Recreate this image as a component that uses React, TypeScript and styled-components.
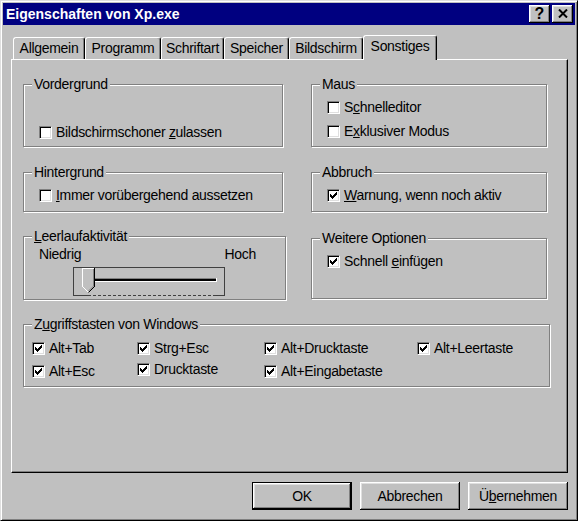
import React from "react";
import styled, { createGlobalStyle } from "styled-components";

const GlobalStyle = createGlobalStyle`
  html, body {
    margin: 0;
    padding: 0;
    background: #c0c0c0;
  }
  body {
    font-family: "Liberation Sans", Arial, sans-serif;
    font-size: 14px;
    letter-spacing: -0.3px;
    color: #000;
  }
`;

const raised = `
  box-shadow: inset -1px -1px #000, inset 1px 1px #fff,
    inset -2px -2px #808080, inset 2px 2px #dfdfdf;
`;

const Window = styled.div`
  width: 578px;
  height: 521px;
  box-sizing: border-box;
  background: #c0c0c0;
  border: 1px solid;
  border-color: #dfdfdf #000 #000 #dfdfdf;
  box-shadow: inset 1px 1px #fff, inset -1px -1px #808080;
  padding: 2px;
  display: flex;
  flex-direction: column;
`;

const TitleBar = styled.div`
  height: 22px;
  background: #000080;
  display: flex;
  align-items: center;
  padding: 0 2px 0 3px;
`;

const TitleText = styled.div`
  flex: 1;
  color: #fff;
  font-weight: bold;
  font-size: 14px;
  letter-spacing: 0;
  white-space: nowrap;
`;

const CaptionButtons = styled.div`
  display: flex;
  gap: 2px;
`;

const CaptionButton = styled.div`
  width: 21px;
  height: 18px;
  box-sizing: border-box;
  background: #c0c0c0;
  ${raised}
  display: flex;
  align-items: center;
  justify-content: center;
  font-weight: bold;
  font-size: 16px;
  line-height: 1;
  letter-spacing: 0;
  padding-bottom: 1px;
`;

const Body = styled.div`
  padding: 10px 7px 0 8px;
  display: flex;
  flex-direction: column;
`;

const TabStrip = styled.div`
  display: flex;
  align-items: flex-end;
  height: 24px;
  padding-left: 2px;
  position: relative;
  z-index: 1;
`;

const Tab = styled.div<{ $w: number; $active?: boolean }>`
  width: ${(p) => p.$w}px;
  height: ${(p) => (p.$active ? 25 : 22)}px;
  margin-bottom: ${(p) => (p.$active ? -1 : 0)}px;
  box-sizing: border-box;
  border: 1px solid;
  border-bottom: none;
  border-color: #fff #000 transparent #fff;
  border-radius: 3px 3px 0 0;
  box-shadow: inset -1px 0 #808080;
  background: #c0c0c0;
  display: flex;
  justify-content: center;
  padding-top: 4px;
  line-height: 13px;
  white-space: nowrap;
`;

const Sheet = styled.div`
  width: 557px;
  height: 414px;
  box-sizing: border-box;
  border: 1px solid;
  border-color: #fff #000 #000 #fff;
  box-shadow: inset -1px -1px #808080;
  padding: 24px 0 0 11px;
`;

const Row = styled.div<{ $mt?: number }>`
  display: grid;
  grid-template-columns: 288px 236px;
  align-items: start;
  margin-top: ${(p) => p.$mt ?? 0}px;
`;

const Group = styled.div<{ $w: number; $h: number; $pt: number; $mt?: number }>`
  position: relative;
  box-sizing: border-box;
  width: ${(p) => p.$w}px;
  height: ${(p) => p.$h}px;
  margin-top: ${(p) => p.$mt ?? 0}px;
  border: 1px solid #808080;
  box-shadow: inset 1px 1px #fff, 1px 1px #fff;
  padding: ${(p) => p.$pt}px 0 0 15px;
`;

const Legend = styled.div`
  position: absolute;
  top: -8px;
  left: 8px;
  padding: 0 2px;
  background: #c0c0c0;
  line-height: 14px;
  white-space: nowrap;
`;

const Key = styled.span`
  text-decoration: underline;
`;

const CheckList = styled.div`
  display: flex;
  flex-direction: column;
  gap: 11px;
`;

const CheckRow = styled.div<{ $up?: boolean }>`
  display: flex;
  align-items: center;
  gap: 4px;
  height: 13px;
  line-height: 13px;
  white-space: nowrap;
  margin-top: ${(p) => (p.$up ? -2 : 0)}px;
`;

const CheckBox = styled.span`
  display: block;
  flex: none;
  width: 13px;
  height: 13px;
  box-sizing: border-box;
  background: #fff;
  border: 1px solid;
  border-color: #808080 #fff #fff #808080;
  box-shadow: inset 1px 1px #000, inset -1px -1px #dfdfdf;
`;

const Mark = styled.svg`
  display: block;
`;

const KeysGrid = styled.div`
  display: grid;
  grid-template-columns: 105px 127px 153px auto;
  row-gap: 10px;
  margin-left: -7px;
`;

const SliderLabels = styled.div`
  width: 217px;
  display: flex;
  justify-content: space-between;
  line-height: 13px;
`;

const SliderFrame = styled.svg`
  display: block;
  margin: 6px 0 0 34px;
`;

const ButtonRow = styled.div`
  width: 557px;
  display: flex;
  justify-content: flex-end;
  gap: 8px;
  margin-top: 9px;
`;

const Button = styled.button<{ $default?: boolean }>`
  width: 100px;
  height: 28px;
  box-sizing: border-box;
  padding: 0;
  font: inherit;
  letter-spacing: inherit;
  color: #000;
  background: #c0c0c0;
  border: ${(p) => (p.$default ? "1px solid #000" : "none")};
  ${raised}
`;

const markCols = [4, 5, 6, 5, 4, 3, 2];

const Check = ({
  checked,
  up,
  children,
}: {
  checked?: boolean;
  up?: boolean;
  children: React.ReactNode;
}) => (
  <CheckRow $up={up}>
    <CheckBox>
      {checked && (
        <Mark width="11" height="11" viewBox="0 0 11 11" shapeRendering="crispEdges">
          {markCols.map((y, i) => (
            <rect key={i} x={2 + i} y={y} width="1" height="3" fill="#000" />
          ))}
        </Mark>
      )}
    </CheckBox>
    <span>{children}</span>
  </CheckRow>
);

const Slider = () => (
  <SliderFrame width="152" height="29" viewBox="0 0 152 29">
    <g shapeRendering="crispEdges" stroke="#404040" fill="none">
      <path d="M0.5 28.5 V0.5 H151.5 V28.5" />
      <path d="M0 28.5 H15 M140 28.5 H152" />
      <path d="M15 28.5 H140" strokeDasharray="3 2" />
    </g>
    <g shapeRendering="crispEdges">
      <rect x="15" y="11" width="128" height="1" fill="#808080" />
      <rect x="15" y="12" width="128" height="2" fill="#000" />
      <rect x="15" y="14" width="129" height="1" fill="#fff" />
      <rect x="143" y="11" width="1" height="4" fill="#fff" />
    </g>
    <polygon points="9,1 22,1 22,19 15.5,25.5 9,19" fill="#c0c0c0" />
    <path d="M9.5 19.5 V1.5 H21" stroke="#fff" fill="none" shapeRendering="crispEdges" />
    <path d="M9.5 19.5 L15.5 25.5" stroke="#fff" fill="none" />
    <path d="M20.5 2 V19" stroke="#808080" fill="none" shapeRendering="crispEdges" />
    <path d="M20.5 19 L15.5 24" stroke="#808080" fill="none" />
    <path d="M21.5 1 V19.5" stroke="#000" fill="none" shapeRendering="crispEdges" />
    <path d="M21.5 19.5 L15.5 25.5" stroke="#000" fill="none" />
  </SliderFrame>
);

const tabs = [
  { label: "Allgemein", w: 72 },
  { label: "Programm", w: 76 },
  { label: "Schriftart", w: 63 },
  { label: "Speicher", w: 65 },
  { label: "Bildschirm", w: 74 },
  { label: "Sonstiges", w: 74, active: true },
];

export default function App() {
  return (
    <>
      <GlobalStyle />
      <Window>
        <TitleBar>
          <TitleText>Eigenschaften von Xp.exe</TitleText>
          <CaptionButtons>
            <CaptionButton>?</CaptionButton>
            <CaptionButton>
              <svg width="10" height="9" viewBox="0 0 10 9">
                <path d="M1 0.5 L9 8.5 M9 0.5 L1 8.5" stroke="#000" strokeWidth="2" />
              </svg>
            </CaptionButton>
          </CaptionButtons>
        </TitleBar>

        <Body>
          <TabStrip>
            {tabs.map((t) => (
              <Tab key={t.label} $w={t.w} $active={t.active}>
                {t.label}
              </Tab>
            ))}
          </TabStrip>

          <Sheet>
            <Row>
              <Group $w={260} $h={63} $pt={41}>
                <Legend>Vordergrund</Legend>
                <Check>
                  Bildschirmschoner <Key>z</Key>ulassen
                </Check>
              </Group>
              <Group $w={236} $h={63} $pt={16}>
                <Legend>Maus</Legend>
                <CheckList>
                  <Check>
                    S<Key>c</Key>hnelleditor
                  </Check>
                  <Check>
                    E<Key>x</Key>klusiver Modus
                  </Check>
                </CheckList>
              </Group>
            </Row>

            <Row $mt={25}>
              <Group $w={260} $h={40} $pt={16}>
                <Legend>Hintergrund</Legend>
                <Check>
                  <Key>I</Key>mmer vorübergehend aussetzen
                </Check>
              </Group>
              <Group $w={236} $h={40} $pt={16}>
                <Legend>Abbruch</Legend>
                <Check checked>
                  <Key>W</Key>arnung, wenn noch aktiv
                </Check>
              </Group>
            </Row>

            <Row $mt={24}>
              <Group $w={263} $h={64} $pt={11}>
                <Legend>
                  <Key>L</Key>eerlaufaktivität
                </Legend>
                <SliderLabels>
                  <span>Niedrig</span>
                  <span>Hoch</span>
                </SliderLabels>
                <Slider />
              </Group>
              <Group $w={236} $h={61} $pt={16} $mt={2}>
                <Legend>Weitere Optionen</Legend>
                <Check checked>
                  Schnell <Key>e</Key>infügen
                </Check>
              </Group>
            </Row>

            <Group $w={527} $h={63} $pt={17} $mt={24}>
              <Legend>
                Z<Key>u</Key>griffstasten von Windows
              </Legend>
              <KeysGrid>
                <Check checked>Alt+Tab</Check>
                <Check checked>Strg+Esc</Check>
                <Check checked>Alt+Drucktaste</Check>
                <Check checked>Alt+Leertaste</Check>
                <Check checked>Alt+Esc</Check>
                <Check checked up>
                  Drucktaste
                </Check>
                <Check checked>Alt+Eingabetaste</Check>
              </KeysGrid>
            </Group>
          </Sheet>

          <ButtonRow>
            <Button $default>OK</Button>
            <Button>Abbrechen</Button>
            <Button>
              Ü<Key>b</Key>ernehmen
            </Button>
          </ButtonRow>
        </Body>
      </Window>
    </>
  );
}
